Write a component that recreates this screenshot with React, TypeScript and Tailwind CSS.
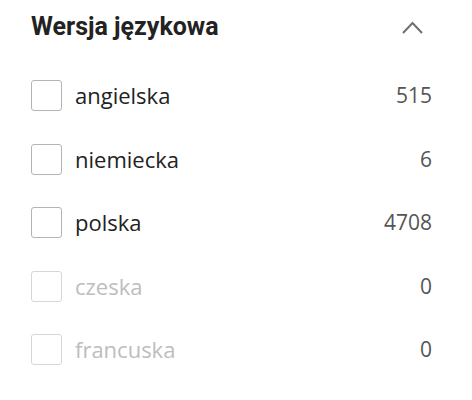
const options = [
  { label: "angielska", count: 515, disabled: false },
  { label: "niemiecka", count: 6, disabled: false },
  { label: "polska", count: 4708, disabled: false },
  { label: "czeska", count: 0, disabled: true },
  { label: "francuska", count: 0, disabled: true },
];

export default function App() {
  return (
    <div className="h-[400px] w-[472px] bg-white pl-[31px] pr-[40px]">
      <div className="flex h-[54px] items-center justify-between">
        <h2 className="font-['Roboto',sans-serif] text-[25px] font-bold text-[#222]">
          Wersja językowa
        </h2>
        <svg
          width="21"
          height="13"
          viewBox="0 0 21 13"
          fill="none"
          stroke="#707070"
          strokeWidth="2"
          className="mr-[9px]"
        >
          <path d="M1 12L10.5 2L20 12" />
        </svg>
      </div>
      <ul className="mt-[10px]">
        {options.map((o) => (
          <li key={o.label} className="flex h-[63.5px] items-center font-['Open_Sans',sans-serif] text-[22px]">
            <span
              className={
                "h-[31px] w-[31px] rounded-[3px] border " +
                (o.disabled ? "border-[#d6d6d6]" : "border-[#b4b4b4]")
              }
            />
            <span className={"ml-[13px] flex-1 " + (o.disabled ? "text-[#bdbdbd]" : "text-[#222]")}>
              {o.label}
            </span>
            <span className="text-[21px] text-[#555]">{o.count}</span>
          </li>
        ))}
      </ul>
    </div>
  );
}
